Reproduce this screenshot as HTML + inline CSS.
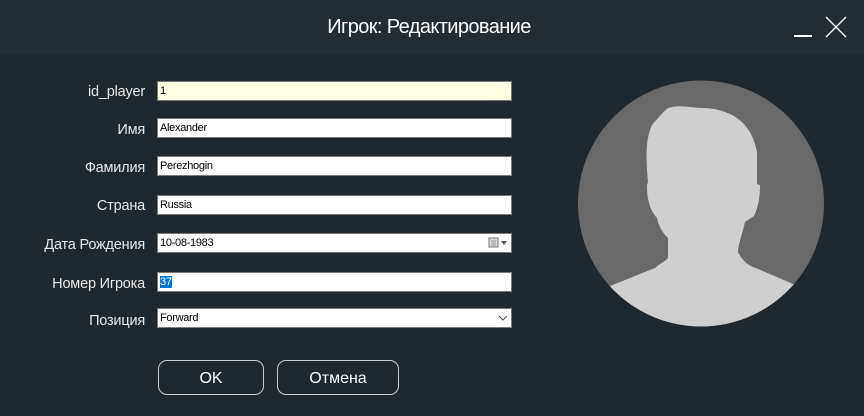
<!DOCTYPE html>
<html><head><meta charset="utf-8"><style>
*{margin:0;padding:0;box-sizing:border-box}
body{width:864px;height:416px;background:#1f282f;font-family:"Liberation Sans","Noto Sans CJK SC",sans-serif;position:relative;overflow:hidden;color:#fff}
.hdr{position:absolute;left:0;top:0;width:864px;height:54px;background:#232c33}
.title{position:absolute;left:0;width:858px;top:16px;text-align:center;font-size:20px;letter-spacing:-0.6px}
.lbl{position:absolute;right:719px;font-size:14.5px;color:#e8e8e8;white-space:nowrap;letter-spacing:-0.2px}
.in{position:absolute;left:157px;width:355px;height:20px;background:#fff;border:1px solid #7a7a7a;font-size:11px;color:#000;padding:3px 0 0 2px;letter-spacing:-0.3px}
.btn{position:absolute;top:360px;height:35px;border:1px solid #ccc;border-radius:9px;font-size:16px;text-align:center;line-height:35px;color:#fff}
</style></head><body>
<div class="hdr"><div class="title">Игрок: Редактирование</div>
<div style="position:absolute;left:794px;top:35px;width:18px;height:2px;background:#fff"></div>
<svg style="position:absolute;left:825px;top:16px" width="22" height="22"><path d="M1 1L21 21M21 1L1 21" stroke="#fff" stroke-width="1.4"/></svg>
</div>
<div class="lbl" style="top:84px">id_player</div><div class="in" style="top:81px;background:#ffffe3">1</div>
<div class="lbl" style="top:122px">Имя</div><div class="in" style="top:118px">Alexander</div>
<div class="lbl" style="top:160px">Фамилия</div><div class="in" style="top:156px">Perezhogin</div>
<div class="lbl" style="top:198px">Страна</div><div class="in" style="top:195px">Russia</div>
<div class="lbl" style="top:237px">Дата Рождения</div><div class="in" style="top:233px">10-08-1983
<svg style="position:absolute;right:3px;top:3px" width="20" height="12"><rect x="1" y="1" width="9" height="9" fill="#ddd" stroke="#777"/><path d="M3 4h5M3 6h5M3 8h5" stroke="#999"/><path d="M13 4h6l-3 4z" fill="#556"/></svg></div>
<div class="lbl" style="top:276px">Номер Игрока</div><div class="in" style="top:272px"><span style="background:#0078d7;color:#fff">37</span></div>
<div class="lbl" style="top:313px">Позиция</div><div class="in" style="top:308px">Forward
<svg style="position:absolute;right:3px;top:6px" width="10" height="7"><path d="M1 1l4 4 4-4" stroke="#444" fill="none"/></svg></div>
<div class="btn" style="left:158px;width:106px">OK</div>
<div class="btn" style="left:277px;width:122px">Отмена</div>
<svg style="position:absolute;left:0;top:0" width="864" height="416">
<defs><clipPath id="c"><circle cx="701" cy="203.5" r="123"/></clipPath></defs>
<circle cx="701" cy="203.5" r="123" fill="#696969"/>
<path clip-path="url(#c)" fill="#cfcfcf" d="M668 108C680 104 690 108 705 108C735 110 752 125 757 152L757 184L760 185C760 200 757 210 754 216L745 222C742 235 738 245 738 252C742 260 748 266 756 268L793 284L830 300L830 340L570 340L570 300L610 286L655 268C662 262 668 260 668 257L668 238C662 232 658 225 657 218C650 210 647 200 647 185L648 182C646 160 645 140 652 125C658 118 663 112 668 108Z"/>
</svg>
</body></html>
